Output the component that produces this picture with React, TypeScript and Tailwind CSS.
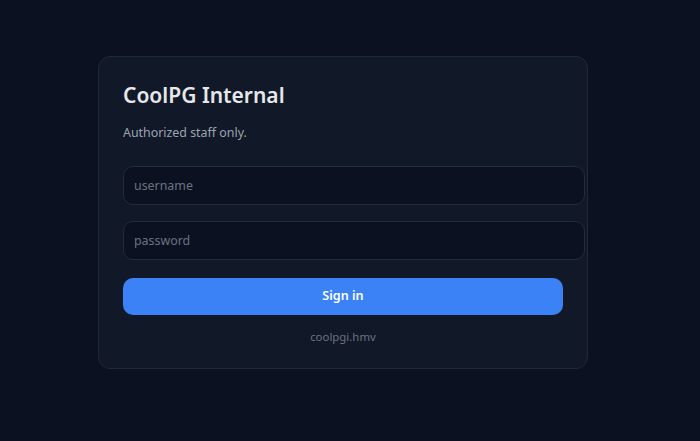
import React from "react";

export default function App() {
  return (
    <div
      className="w-[700px] h-[441px] bg-[#0b1120] flex items-start justify-start pl-[98px] pt-[56px]"
      style={{ fontFamily: '"Noto Sans", "DejaVu Sans", sans-serif' }}
    >
      <div className="w-[490px] h-[313px] bg-[#111827] border border-[#1f2937] rounded-[12px] px-[24px] pt-[23px]">
        <h1 className="text-[21px] font-semibold text-[#e5e7eb] leading-[30px]">CoolPG Internal</h1>
        <p className="text-[12.4px] text-[#9ca3af] mt-[14px] leading-[18px]">Authorized staff only.</p>
        <div className="mt-[24px] flex flex-col gap-[16px]">
          <input
            placeholder="username"
            className="box-content w-[440px] h-[17px] pt-[11px] pb-[9px] px-[10px] bg-[#0b1120] border border-[#222c3c] rounded-[10px] text-[12.4px] text-[#e5e7eb] placeholder:text-[#6b7280] outline-none"
          />
          <input
            type="password"
            placeholder="password"
            className="box-content w-[440px] h-[17px] pt-[11px] pb-[9px] px-[10px] bg-[#0b1120] border border-[#222c3c] rounded-[10px] text-[12.4px] text-[#e5e7eb] placeholder:text-[#6b7280] outline-none"
          />
        </div>
        <button className="mt-[18px] w-[440px] h-[37px] bg-[#3b82f6] rounded-[10px] text-white text-[12.6px] font-semibold">
          Sign in
        </button>
        <p className="mt-[14px] text-center text-[11.4px] text-[#6b7280] leading-[16px]">coolpgi.hmv</p>
      </div>
    </div>
  );
}
